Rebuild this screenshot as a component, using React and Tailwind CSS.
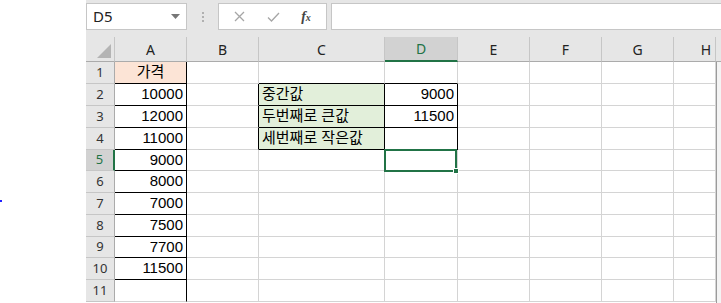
import React from 'react'

const cellFont = { fontFamily: '"Liberation Sans", "Noto Sans CJK KR", sans-serif' }
const uiFont = { fontFamily: '"Noto Sans", "Liberation Sans", sans-serif' }

const colHeads = ['A', 'B', 'C', 'D', 'E', 'F', 'G', 'H']
const rowHeights = ['h-[22px]', 'h-[22px]', 'h-[22px]', 'h-[22px]', 'h-[21px]', 'h-[22px]', 'h-[22px]', 'h-[22px]', 'h-[21px]', 'h-[22px]', 'h-[22px]']
const colA = ['가격', '10000', '12000', '11000', '9000', '8000', '7000', '7500', '7700', '11500', '']

const cellText = (r, c) => {
  if (c === 0) return colA[r]
  if (c === 2) return ['', '중간값', '두번째로 큰값', '세번째로 작은값'][r] || ''
  if (c === 3) return ['', '9000', '11500'][r] || ''
  return ''
}

const blackRight = (r, c) =>
  (c === 0) || (c === 1 && r >= 1 && r <= 3) || ((c === 2 || c === 3) && r >= 1 && r <= 3)
const blackBottom = (r, c) =>
  (c === 0 && r <= 9) || ((c === 2 || c === 3) && r <= 3)

function Cell({ r, c }) {
  const text = cellText(r, c)
  const right = blackRight(r, c) ? 'border-r-black' : 'border-r-[#d4d4d4]'
  const bottom = blackBottom(r, c) ? 'border-b-black' : 'border-b-[#d4d4d4]'
  let bg = 'bg-white'
  if (c === 0 && r === 0) bg = 'bg-[#fce4d6]'
  if (c === 2 && r >= 1 && r <= 3) bg = 'bg-[#e2efda]'
  let align = 'justify-end pr-[3px]'
  if (c === 2) align = 'justify-start pl-[3px]'
  if (c === 0 && r === 0) align = 'justify-center'
  return (
    <div className={`relative flex items-center overflow-visible whitespace-nowrap border-r border-b ${right} ${bottom} ${bg} ${align} ${rowHeights[r]} text-[15px] text-black`} style={cellFont}>
      {text}
      {c === 3 && r === 4 && (
        <div className="absolute -left-px -top-px z-10 h-[23px] w-[73px] border-2 border-[#217346]">
          <div className="absolute -bottom-[4px] -right-[4px] h-[6px] w-[6px] border border-white bg-[#217346]" />
        </div>
      )}
    </div>
  )
}

export default function App() {
  return (
    <div className="flex h-[303px] w-[721px] overflow-hidden bg-white">
      <div className="w-[86px] shrink-0 pt-[200px]">
        <div className="h-[2px] w-[2px] bg-[#2020ff]" />
      </div>
      <div className="flex min-w-0 flex-1 flex-col">
        <div className="flex h-[37px] shrink-0 items-start bg-[#e6e6e6] pt-[3px]" style={uiFont}>
          <div className="flex h-[27px] w-[101px] items-center justify-between border border-[#c6c6c6] bg-white pl-[6px] pr-[6px] text-[15px] text-[#222]">
            <span>D5</span>
            <svg width="9" height="5" viewBox="0 0 9 5"><path d="M0 0h9L4.5 5z" fill="#777" /></svg>
          </div>
          <div className="flex h-[27px] w-[31px] flex-col items-center justify-center gap-[2px]">
            <div className="h-[2px] w-[2px] bg-[#b0b0b0]" />
            <div className="h-[2px] w-[2px] bg-[#b0b0b0]" />
            <div className="h-[2px] w-[2px] bg-[#b0b0b0]" />
          </div>
          <div className="flex h-[27px] w-[109px] items-center border border-[#c6c6c6] bg-white">
            <div className="flex w-[40px] justify-center">
              <svg width="11" height="11" viewBox="0 0 11 11"><path d="M1 1l9 9M10 1l-9 9" stroke="#a6a6a6" strokeWidth="1.3" /></svg>
            </div>
            <div className="flex w-[28px] justify-center">
              <svg width="13" height="10" viewBox="0 0 13 10"><path d="M1 5.5l3.5 3.5L12 1" fill="none" stroke="#a6a6a6" strokeWidth="1.3" /></svg>
            </div>
            <div className="flex w-[38px] justify-center text-[14px] italic text-[#444]" style={{ fontFamily: '"Liberation Serif", serif' }}>
              <span className="font-bold">f<span className="text-[10px]">x</span></span>
            </div>
          </div>
          <div className="ml-[4px] h-[27px] flex-1 border border-r-0 border-[#c6c6c6] bg-white" />
        </div>
        <div className="flex min-h-0 flex-1">
          <div className="grid w-[630px] shrink-0 grid-cols-[29px_72px_72px_126px_73px_72px_72px_72px_42px] content-start">
            <div className="relative h-[25px] border-r border-b border-r-[#c6c6c6] border-b-[#ababab] bg-[#e6e6e6]">
              <svg className="absolute bottom-[3px] right-[3px]" width="14" height="14" viewBox="0 0 14 14"><path d="M14 0v14H0z" fill="#b4b4b4" /></svg>
            </div>
            {colHeads.map((h, i) => (
              <div
                key={h}
                className={`flex h-[25px] items-center justify-center border-r border-b border-r-[#c6c6c6] text-[14px] ${i === 3 ? 'border-b-2 border-b-[#217346] bg-[#d2d2d2] text-[#217346]' : 'border-b-[#ababab] bg-[#e6e6e6] text-[#222]'} ${i === 7 ? 'justify-end pr-[4px]' : ''}`}
                style={uiFont}
              >
                {h}
              </div>
            ))}
            {rowHeights.map((rh, r) => (
              <React.Fragment key={r}>
                <div
                  className={`flex ${rh} items-center justify-center border-b border-b-[#c6c6c6] text-[13px] ${r === 4 ? 'border-r-2 border-r-[#217346] bg-[#d2d2d2] text-[#217346]' : 'border-r border-r-[#ababab] bg-[#e6e6e6] text-[#333]'}`}
                  style={uiFont}
                >
                  {r + 1}
                </div>
                {colHeads.map((h, c) => (
                  <Cell key={h} r={r} c={c} />
                ))}
              </React.Fragment>
            ))}
          </div>
          <div className="flex flex-1 flex-col">
            <div className="h-[25px] border-b border-b-[#ababab] bg-[#e6e6e6]" />
            <div className="flex-1 border-l border-l-[#9b9b9b] bg-[#f4f4f4]" />
          </div>
        </div>
      </div>
    </div>
  )
}
